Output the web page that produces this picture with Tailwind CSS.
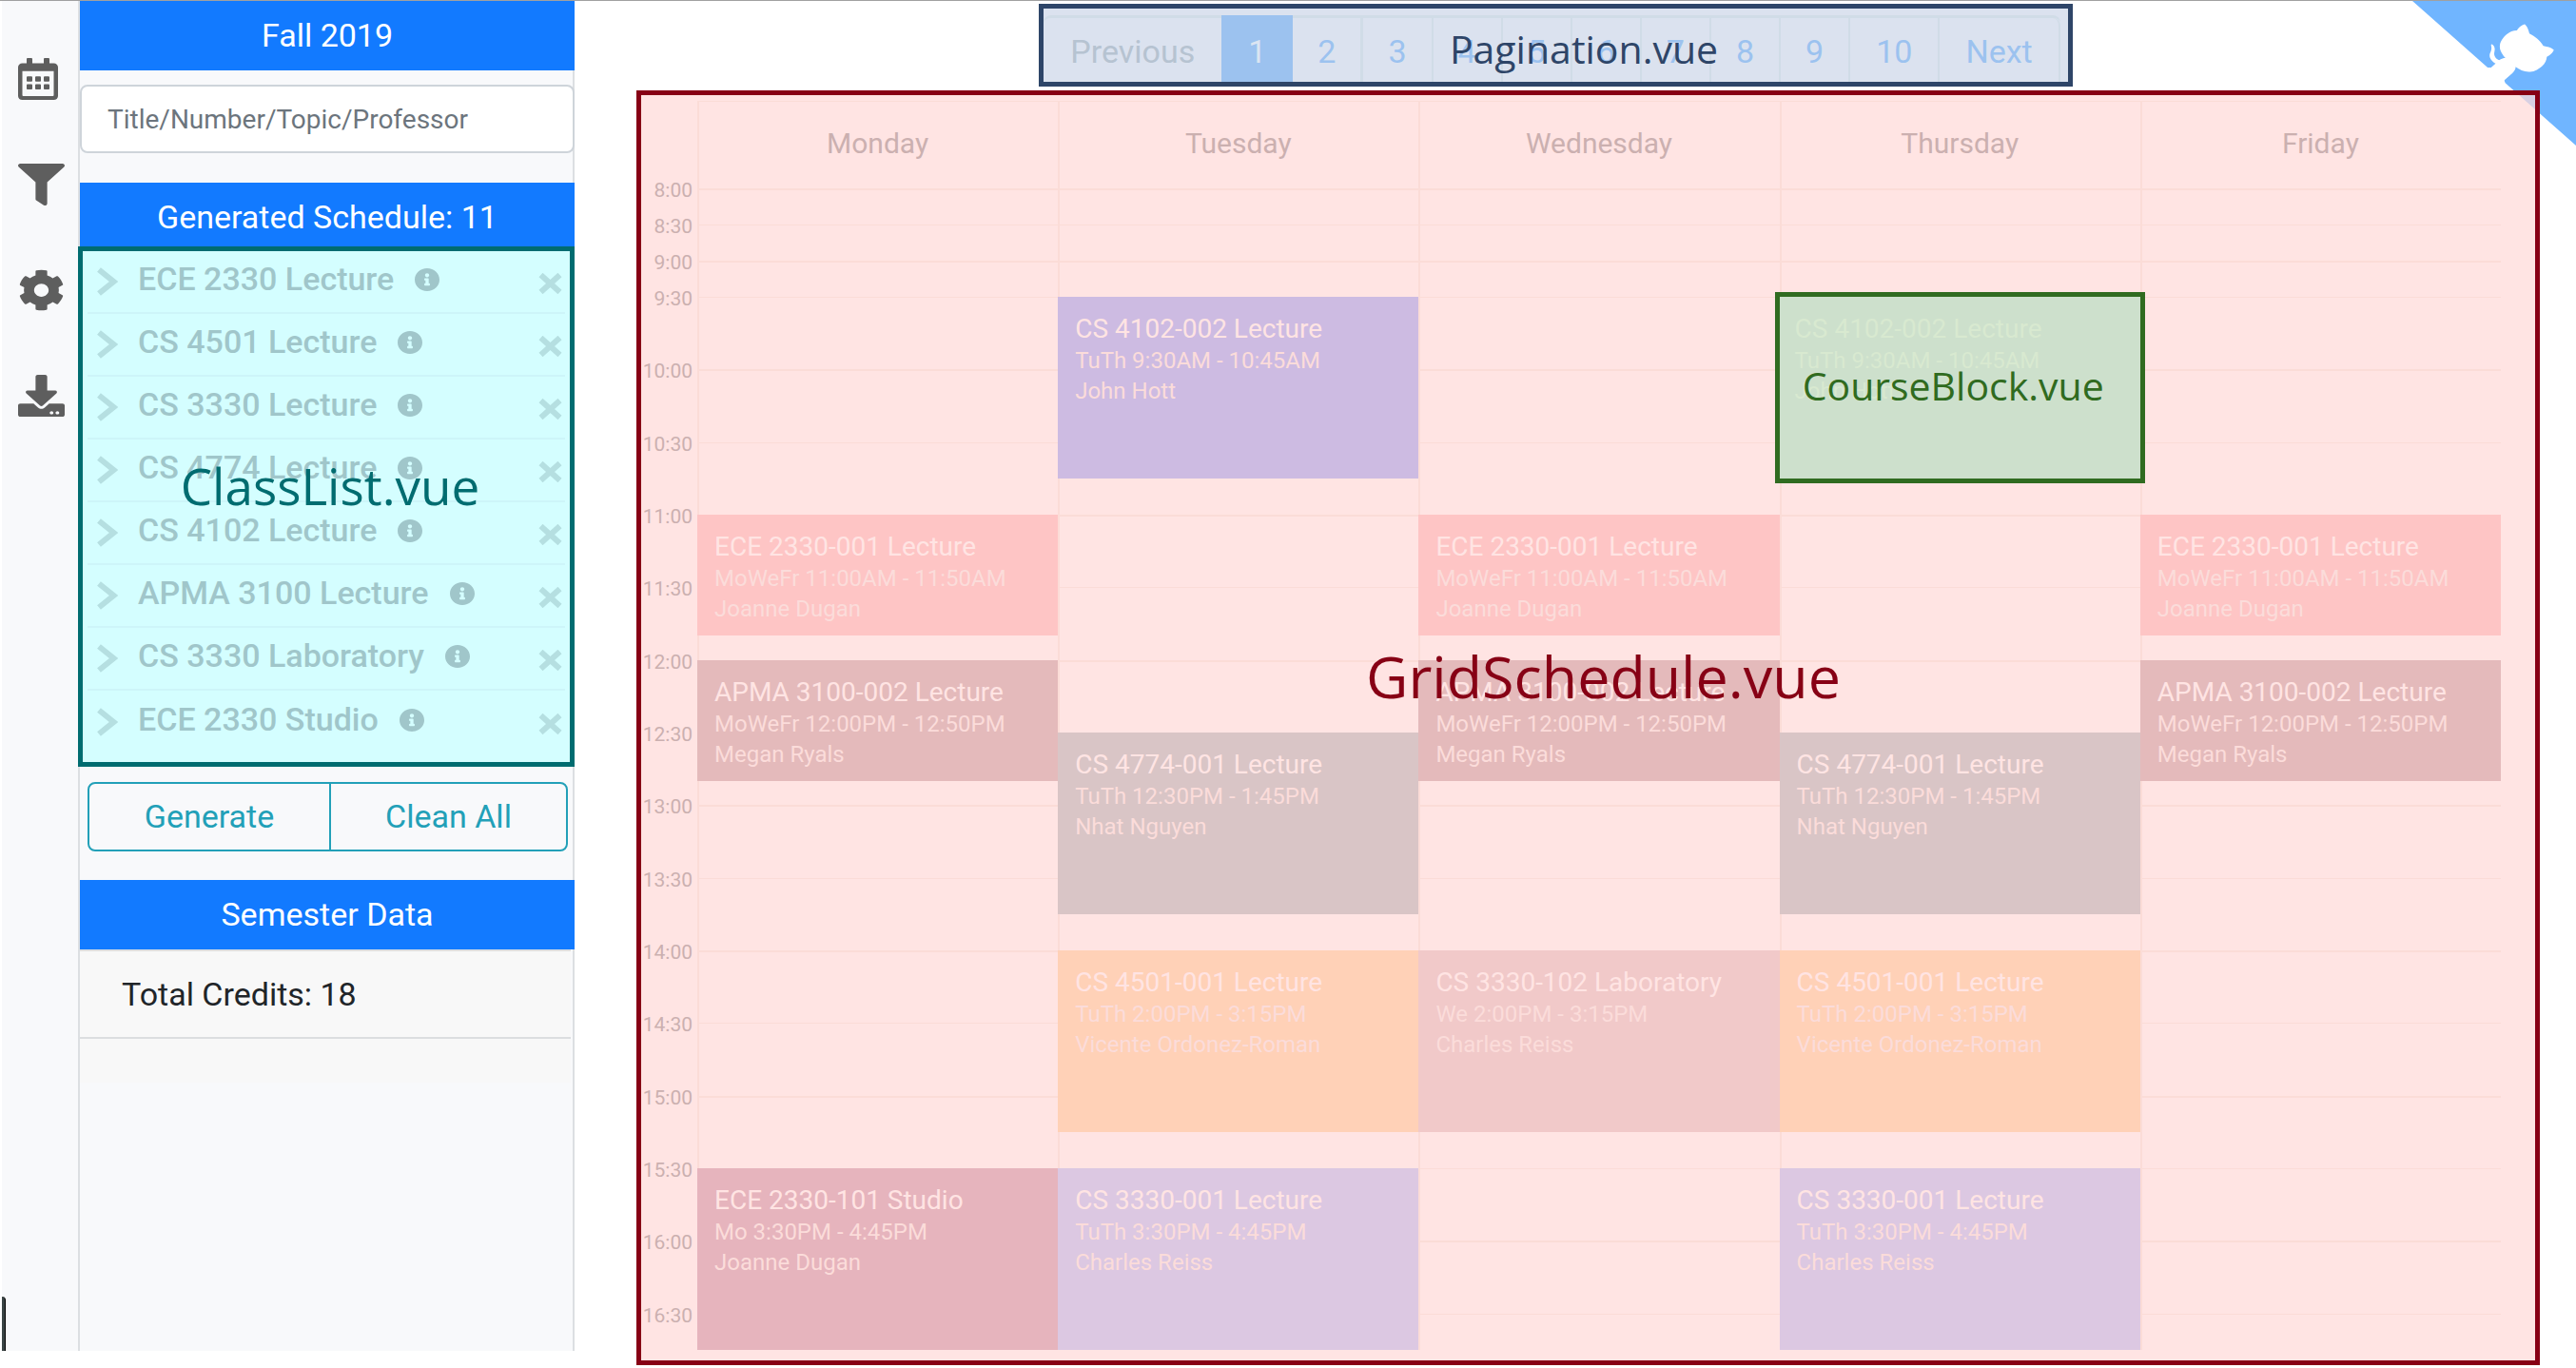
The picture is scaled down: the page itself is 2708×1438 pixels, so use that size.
<!DOCTYPE html>
<html lang="en">
<head>
<meta charset="utf-8">
<meta name="viewport" content="width=device-width, initial-scale=1">
<title>Schedule components</title>
<script src="https://cdn.jsdelivr.net/npm/@tailwindcss/browser@4"></script>
</head>
<body class="relative flex min-h-screen flex-col border-t border-[#a0a0a0] bg-white font-[Roboto,sans-serif] text-[34px] text-[#212529]">

<!-- corner ribbon -->
<a href="#" aria-label="View source on GitHub" class="absolute top-0 right-0">
  <svg class="block h-[152px] w-[172px]" viewBox="0 0 250 250" preserveAspectRatio="none" aria-hidden="true">
    <path fill="#70b5ff" d="M0,0 L115,115 L130,115 L142,142 L250,250 L250,0 Z"/>
    <path fill="#fff" d="M128.3,109.0 C113.8,99.7 119.0,89.6 119.0,89.6 C122.0,82.7 120.5,78.6 120.5,78.6 C119.2,72.0 123.4,76.3 123.4,76.3 C127.3,80.9 125.5,87.3 125.5,87.3 C122.9,97.6 130.6,101.9 134.4,103.2"/>
    <path fill="#fff" d="M115.0,115.0 C114.9,115.1 118.7,116.5 119.8,115.4 L133.7,101.6 C136.9,99.2 139.9,98.4 142.2,98.6 C133.8,88.0 127.5,74.4 143.8,58.0 C148.5,53.4 154.0,51.2 159.7,51.0 C160.3,49.4 163.2,43.6 171.4,40.1 C171.4,40.1 176.1,42.5 178.8,56.2 C183.1,58.6 187.2,61.8 190.9,65.4 C194.5,69.0 197.7,73.2 200.1,77.6 C213.8,80.2 216.3,84.9 216.3,84.9 C212.7,93.1 206.9,96.0 205.4,96.6 C205.1,102.4 203.0,107.8 198.3,112.5 C181.9,128.9 168.3,122.5 157.7,114.1 C157.9,116.9 156.7,120.9 152.7,124.9 L141.0,136.5 C139.8,137.7 141.6,141.9 141.8,141.8 Z"/>
  </svg>
</a>

<div class="flex flex-1">
  <!-- icon bar -->
  <nav aria-label="Tools" class="relative mb-[18px] ml-[2px] flex w-20 shrink-0 flex-col gap-[67px] bg-[#f8f9fb] pt-[60px] pl-[17px] text-[#5e5e5e]">
    <button type="button" aria-label="Select semester" class="h-11 w-[42px]">
      <svg class="size-full" viewBox="0 0 448 512" preserveAspectRatio="none" fill="currentColor"><path d="M148 288h-40c-6.600 0-12-5.400-12-12v-40c0-6.600 5.400-12 12-12h40c6.600 0 12 5.400 12 12v40c0 6.600-5.400 12-12 12zm108-12v-40c0-6.600-5.400-12-12-12h-40c-6.600 0-12 5.400-12 12v40c0 6.600 5.400 12 12 12h40c6.600 0 12-5.400 12-12zm96 0v-40c0-6.600-5.400-12-12-12h-40c-6.600 0-12 5.400-12 12v40c0 6.600 5.400 12 12 12h40c6.600 0 12-5.400 12-12zm-96 96v-40c0-6.600-5.400-12-12-12h-40c-6.600 0-12 5.400-12 12v40c0 6.600 5.400 12 12 12h40c6.600 0 12-5.400 12-12zm-96 0v-40c0-6.600-5.400-12-12-12h-40c-6.600 0-12 5.400-12 12v40c0 6.600 5.400 12 12 12h40c6.600 0 12-5.400 12-12zm192 0v-40c0-6.600-5.400-12-12-12h-40c-6.600 0-12 5.400-12 12v40c0 6.600 5.400 12 12 12h40c6.600 0 12-5.400 12-12zm96-260v352c0 26.500-21.500 48-48 48H48c-26.500 0-48-21.500-48-48V112c0-26.500 21.500-48 48-48h48V12c0-6.600 5.400-12 12-12h40c6.600 0 12 5.400 12 12v52h128V12c0-6.600 5.400-12 12-12h40c6.600 0 12 5.400 12 12v52h48c26.500 0 48 21.500 48 48zm-48 346V160H48v298c0 3.300 2.700 6 6 6h340c3.300 0 6-2.700 6-6z"/></svg>
    </button>
    <button type="button" aria-label="Filters" class="h-11 w-[49px]">
      <svg class="size-full" viewBox="0 0 512 512" preserveAspectRatio="none" fill="currentColor"><path d="M487.976 0H24.028C2.710 0-8.047 25.866 7.058 40.971L192 225.941V432c0 7.831 3.821 15.170 10.237 19.662l80 55.980C298.020 518.690 320 507.493 320 487.980V225.941l184.947-184.970C520.021 25.896 509.338 0 487.976 0z"/></svg>
    </button>
    <button type="button" aria-label="Settings" class="h-11 w-[49px]">
      <svg class="size-full" viewBox="0 0 512 512" preserveAspectRatio="none" fill="currentColor"><path d="M487.400 315.700l-42.600-24.600c4.300-23.200 4.300-47 0-70.200l42.600-24.600c4.900-2.800 7.100-8.600 5.500-14-11.100-35.600-30-67.800-54.700-94.600-3.800-4.100-10-5.100-14.800-2.300L380.800 110c-17.900-15.400-38.500-27.300-60.800-35.100V25.800c0-5.600-3.900-10.500-9.400-11.700-36.700-8.200-74.300-7.800-109.200 0-5.500 1.200-9.400 6.100-9.400 11.700V75c-22.200 7.900-42.800 19.800-60.800 35.100L88.700 85.500c-4.900-2.800-11-1.900-14.800 2.300-24.700 26.700-43.600 58.900-54.700 94.600-1.700 5.400.6 11.200 5.500 14L67.300 221c-4.300 23.200-4.300 47 0 70.200l-42.600 24.600c-4.900 2.800-7.100 8.600-5.500 14 11.100 35.600 30 67.800 54.700 94.600 3.800 4.100 10 5.100 14.800 2.300l42.600-24.600c17.900 15.400 38.500 27.300 60.800 35.100v49.200c0 5.600 3.900 10.500 9.400 11.700 36.700 8.200 74.300 7.800 109.200 0 5.500-1.200 9.400-6.100 9.400-11.700v-49.200c22.200-7.900 42.800-19.800 60.800-35.100l42.600 24.600c4.900 2.800 11 1.900 14.800-2.300 24.700-26.700 43.600-58.900 54.700-94.600 1.500-5.500-.7-11.300-5.600-14.100zM256 336c-44.100 0-80-35.900-80-80s35.900-80 80-80 80 35.900 80 80-35.900 80-80 80z"/></svg>
    </button>
    <button type="button" aria-label="Download" class="h-11 w-[49px]">
      <svg class="size-full" viewBox="0 0 512 512" preserveAspectRatio="none" fill="currentColor"><path d="M216 0h80c13.300 0 24 10.700 24 24v168h87.700c17.800 0 26.700 21.500 14.100 34.100L269.700 378.300c-7.500 7.500-19.800 7.500-27.300 0L90.100 226.100c-12.600-12.600-3.700-34.100 14.100-34.100H192V24c0-13.300 10.700-24 24-24zm296 376v112c0 13.300-10.700 24-24 24H24c-13.300 0-24-10.700-24-24V376c0-13.300 10.700-24 24-24h146.700l49 49c20.100 20.100 52.500 20.100 72.600 0l49-49H488c13.300 0 24 10.700 24 24zm-124 88c0-11-9-20-20-20s-20 9-20 20 9 20 20 20 20-9 20-20zm64 0c0-11-9-20-20-20s-20 9-20 20 9 20 20 20 20-9 20-20z"/></svg>
    </button>
    <div class="absolute bottom-0 left-0 h-[57px] w-1 rounded-tr-sm border-r border-black bg-[#3b4545]"></div>
  </nav>

  <!-- sidebar -->
  <aside class="mb-[18px] flex w-[522px] shrink-0 flex-col border-x-2 border-[#dcdfe2] bg-[#f8f9fb]">
    <button type="button" class="-mr-[2px] h-[73px] bg-[#127aff] text-center text-white">Fall 2019</button>
    <input type="text" aria-label="Search classes" placeholder="Title/Number/Topic/Professor" class="mt-[15px] -mr-[2px] h-[72px] rounded-lg border-2 border-[#ced4da] bg-white px-[27px] text-[28px] placeholder:text-[#6c757d] placeholder:opacity-100">
    <button type="button" class="mt-[31px] -mr-[2px] h-[67px] bg-[#127aff] pt-[6px] text-center text-white">Generated Schedule: 11</button>

    <section class="relative -mx-[2px] border-5 border-[#006c70] bg-[#d4feff] px-[5px] pb-[9px]">
      <ul id="classes" class="divide-y-2 divide-[#cdf5f9] font-medium text-[#a0c6ca]"></ul>
      <div class="pointer-events-none absolute inset-0 flex items-center justify-center pb-11 pl-2 font-['Open_Sans',sans-serif] text-[53px] text-[#006c70]">ClassList.vue</div>
    </section>

    <div class="mt-4 mr-[5px] ml-2 grid h-[73px] grid-cols-[256fr_249fr] divide-x-2 divide-[#22a0b8] rounded-lg border-2 border-[#22a0b8] text-[#22a0b8]">
      <button type="button">Generate</button>
      <button type="button">Clean All</button>
    </div>

    <button type="button" class="mt-[30px] -mr-[2px] h-[73px] bg-[#127aff] text-center text-white">Semester Data</button>
    <div class="mr-0.5 bg-[#f8f8f8] pb-[46px]">
      <div class="flex h-[94px] items-center border-y-2 border-[#dcdee0] pl-11">Total Credits: 18</div>
    </div>
  </aside>

  <main class="flex min-w-0 flex-1 flex-col pt-[3px] pr-[38px] pb-[3px] pl-[65px]">
    <!-- pagination -->
    <div class="flex justify-center pr-[68px]">
      <nav aria-label="Schedules" class="relative h-[87px] overflow-hidden border-5 border-[#2e4568] bg-[#dbe2ef] pt-[7px] pr-[8px]">
        <div class="flex h-[74px] items-stretch rounded-lg border-t-3 border-[#d0dce7] text-[#9cc2ef]">
          <a href="#" class="flex items-center px-7 text-[#b6c3d1]">Previous</a>
          <a href="#" aria-current="page" class="-mt-[3px] flex items-center bg-[#9cc2ef] px-7 pt-[3px] text-[#dbe5f2]">1</a>
          <a href="#" class="flex items-center border-r-3 border-[#d0dce7] px-[26px]">2</a>
          <a href="#" class="flex items-center border-r-2 border-[#d0dce7] px-[26px]">3</a>
          <a href="#" class="flex items-center border-r-2 border-[#d0dce7] px-[26px]">4</a>
          <a href="#" class="flex items-center border-r-2 border-[#d0dce7] px-[26px]">5</a>
          <a href="#" class="flex items-center border-r-2 border-[#d0dce7] px-[26px]">6</a>
          <a href="#" class="flex items-center border-r-2 border-[#d0dce7] px-[26px]">7</a>
          <a href="#" class="flex items-center border-r-2 border-[#d0dce7] px-[26px]">8</a>
          <a href="#" class="flex items-center border-r-2 border-[#d0dce7] px-[26px]">9</a>
          <a href="#" class="flex items-center border-r-2 border-[#d0dce7] px-[27px]">10</a>
          <a href="#" class="flex items-center rounded-tr-lg border-r-2 border-[#d0dce7] px-[27px]">Next</a>
        </div>
        <div class="pointer-events-none absolute inset-0 flex items-center justify-center pt-2 pl-[59px] font-['Open_Sans',sans-serif] text-[41px] text-[#2e4568]">Pagination.vue</div>
      </nav>
    </div>

    <!-- weekly grid: one row for day names, three short rows, then five-minute rows from 9:30 to 16:45 -->
    <section class="relative mt-1 flex flex-1 flex-col border-5 border-[#870015] bg-[#ffdad9]/73 pt-[6px] pr-9 pb-[11px]">
      <div id="grid" class="grid flex-1 grid-cols-[59px_repeat(5,minmax(0,1fr))] grid-rows-[92px_repeat(3,38px)_repeat(87,minmax(12px,1fr))]"></div>
      <div class="pointer-events-none absolute inset-0 flex items-center justify-center pb-[108px] pl-8 font-['Open_Sans',sans-serif] text-[61px] text-[#870015]">GridSchedule.vue</div>
    </section>
  </main>
</div>

<script>
  const classes = ['ECE 2330 Lecture', 'CS 4501 Lecture', 'CS 3330 Lecture', 'CS 4774 Lecture', 'CS 4102 Lecture', 'APMA 3100 Lecture', 'CS 3330 Laboratory', 'ECE 2330 Studio'];
  document.getElementById('classes').innerHTML = classes.map(name => `
    <li class="flex h-[66px] items-center pr-[3px] pl-[10px]">
      <button type="button" aria-label="Expand ${name}" class="text-[#b5dfe1]">
        <svg class="h-[30px] w-[22px]" viewBox="0 0 22 30" fill="none" stroke="currentColor" stroke-width="6"><path d="M2 2.500L17.500 15L2 27.500"/></svg>
      </button>
      <span class="pb-[6px] pl-[21px]">${name}</span>
      <button type="button" aria-label="About ${name}" class="pb-1 pl-[22px]">
        <svg class="h-6 w-[26px]" viewBox="8 8 496 496" preserveAspectRatio="none" fill="currentColor"><path d="M256 8C119.043 8 8 119.083 8 256c0 136.997 111.043 248 248 248s248-111.003 248-248C504 119.083 392.957 8 256 8zm0 110c23.196 0 42 18.804 42 42s-18.804 42-42 42-42-18.804-42-42 18.804-42 42-42zm56 254c0 6.627-5.373 12-12 12h-88c-6.627 0-12-5.373-12-12v-24c0-6.627 5.373-12 12-12h12v-64h-12c-6.627 0-12-5.373-12-12v-24c0-6.627 5.373-12 12-12h64c6.627 0 12 5.373 12 12v100h12c6.627 0 12 5.373 12 12v24z"/></svg>
      </button>
      <button type="button" aria-label="Remove ${name}" class="ml-auto pt-1 text-[#b5dfe1]">
        <svg class="h-[22px] w-[25px]" viewBox="0 0 25 22" fill="none" stroke="currentColor" stroke-width="6"><path d="M2.500 2L22.500 20M22.500 2L2.500 20"/></svg>
      </button>
    </li>`).join('');

  const days = ['Monday', 'Tuesday', 'Wednesday', 'Thursday', 'Friday'];
  // Grid line for a time given in minutes after midnight
  const line = t => t <= 570 ? 2 + (t - 480) / 30 : 5 + (t - 570) / 5;
  let html = '';
  for (let t = 480; t <= 990; t += 30) {
    const label = Math.floor(t / 60) + ':' + (t % 60 ? '30' : '00');
    html += `<div class="-mt-2 h-0 self-start pr-[5px] text-right text-[21px] leading-[21px] text-[#cbb0b0]" style="grid-area:${line(t)}/1/auto/2">${label}</div>
      <div class="${t % 60 ? 'border-t' : 'border-t-2'} border-[#fbdcd7]" style="grid-area:${line(t)}/2/auto/7"></div>`;
  }
  days.forEach((day, i) => {
    html += `<div class="border-l-2 border-[#fbdcd7]" style="grid-area:1/${i + 2}/-1/auto"></div>
      <div class="flex items-center justify-center border-t border-[#fbdcd7] pb-1 text-[30px] text-[#cbb0b0]" style="grid-area:1/${i + 2}">${day}</div>`;
  });
  const meetings = [
    [1, 570, 645, 'bg-[#cdbbe2]', 'CS 4102-002 Lecture', 'TuTh 9:30AM - 10:45AM', 'John Hott'],
    [3, 570, 645, 'bg-[#cde0cc]', 'CS 4102-002 Lecture', 'TuTh 9:30AM - 10:45AM', 'John Hott'],
    [0, 660, 710, 'bg-[#fec5c5]', 'ECE 2330-001 Lecture', 'MoWeFr 11:00AM - 11:50AM', 'Joanne Dugan'],
    [2, 660, 710, 'bg-[#fec5c5]', 'ECE 2330-001 Lecture', 'MoWeFr 11:00AM - 11:50AM', 'Joanne Dugan'],
    [4, 660, 710, 'bg-[#fec5c5]', 'ECE 2330-001 Lecture', 'MoWeFr 11:00AM - 11:50AM', 'Joanne Dugan'],
    [0, 720, 770, 'bg-[#e4babb]', 'APMA 3100-002 Lecture', 'MoWeFr 12:00PM - 12:50PM', 'Megan Ryals'],
    [2, 720, 770, 'bg-[#e4babb]', 'APMA 3100-002 Lecture', 'MoWeFr 12:00PM - 12:50PM', 'Megan Ryals'],
    [4, 720, 770, 'bg-[#e4babb]', 'APMA 3100-002 Lecture', 'MoWeFr 12:00PM - 12:50PM', 'Megan Ryals'],
    [1, 750, 825, 'bg-[#d9c5c6]', 'CS 4774-001 Lecture', 'TuTh 12:30PM - 1:45PM', 'Nhat Nguyen'],
    [3, 750, 825, 'bg-[#d9c5c6]', 'CS 4774-001 Lecture', 'TuTh 12:30PM - 1:45PM', 'Nhat Nguyen'],
    [1, 840, 915, 'bg-[#ffd1b7]', 'CS 4501-001 Lecture', 'TuTh 2:00PM - 3:15PM', 'Vicente Ordonez-Roman'],
    [3, 840, 915, 'bg-[#ffd1b7]', 'CS 4501-001 Lecture', 'TuTh 2:00PM - 3:15PM', 'Vicente Ordonez-Roman'],
    [2, 840, 915, 'bg-[#f1c9c9]', 'CS 3330-102 Laboratory', 'We 2:00PM - 3:15PM', 'Charles Reiss'],
    [0, 930, 1005, 'bg-[#e6b4bd]', 'ECE 2330-101 Studio', 'Mo 3:30PM - 4:45PM', 'Joanne Dugan'],
    [1, 930, 1005, 'bg-[#dcc8e2]', 'CS 3330-001 Lecture', 'TuTh 3:30PM - 4:45PM', 'Charles Reiss'],
    [3, 930, 1005, 'bg-[#dcc8e2]', 'CS 3330-001 Lecture', 'TuTh 3:30PM - 4:45PM', 'Charles Reiss'],
  ];
  for (const [day, from, to, color, title, time, who] of meetings) {
    const area = `grid-area:${line(from)}/${day + 2}/${line(to)}/auto`;
    if (color === 'bg-[#cde0cc]') {
      html += `<article class="relative" style="${area}">
        <div class="absolute -inset-[5px] overflow-hidden border-5 border-[#306b20] bg-[#cde0cc] pt-[17px] pl-4 text-[#d8e9d0]">
          <h3 class="text-[28px] leading-[34px]">${title}</h3>
          <p class="text-[24px] leading-8">${time}</p>
          <p class="text-[24px] leading-8">${who}</p>
        </div>
        <div class="absolute inset-0 flex items-center justify-center pr-[14px] pb-[3px] font-['Open_Sans',sans-serif] text-[41px] text-[#306b20]">CourseBlock.vue</div>
      </article>`;
    } else {
      html += `<article class="${color} overflow-hidden pt-[17px] pl-[18px] text-[#ffe4e3]" style="${area}">
        <h3 class="text-[28px] leading-[34px]">${title}</h3>
        <p class="text-[24px] leading-8 text-[#fbdcda]">${time}</p>
        <p class="text-[24px] leading-8 text-[#fbdcda]">${who}</p>
      </article>`;
    }
  }
  document.getElementById('grid').innerHTML = html;
</script>
</body>
</html>
